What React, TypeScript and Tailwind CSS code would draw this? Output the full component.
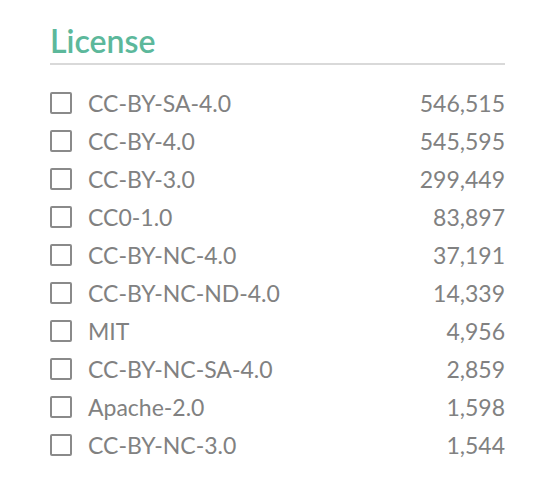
import React from "react";

const rows: [string, string][] = [
  ["CC-BY-SA-4.0", "546,515"],
  ["CC-BY-4.0", "545,595"],
  ["CC-BY-3.0", "299,449"],
  ["CC0-1.0", "83,897"],
  ["CC-BY-NC-4.0", "37,191"],
  ["CC-BY-NC-ND-4.0", "14,339"],
  ["MIT", "4,956"],
  ["CC-BY-NC-SA-4.0", "2,859"],
  ["Apache-2.0", "1,598"],
  ["CC-BY-NC-3.0", "1,544"],
];

export default function App() {
  return (
    <div className="w-[546px] h-[494px] bg-white pl-[50px] pr-[41px] pt-[21px]" style={{ fontFamily: "Lato, 'Open Sans', sans-serif" }}>
      <h2 className="text-[32px] font-semibold text-[#5cb89b] leading-[40px]">License</h2>
      <div className="h-[2px] bg-[#d9d9d9] mt-[2px] mb-[19px]" />
      <ul className="flex flex-col">
        {rows.map(([name, count]) => (
          <li key={name} className="flex items-center h-[38px] text-[23px] text-[#818181]">
            <span className="w-[22px] h-[22px] border-2 border-[#8a8a8a] rounded-[2px] mr-[16px] shrink-0" />
            <span className="flex-1">{name}</span>
            <span>{count}</span>
          </li>
        ))}
      </ul>
    </div>
  );
}
